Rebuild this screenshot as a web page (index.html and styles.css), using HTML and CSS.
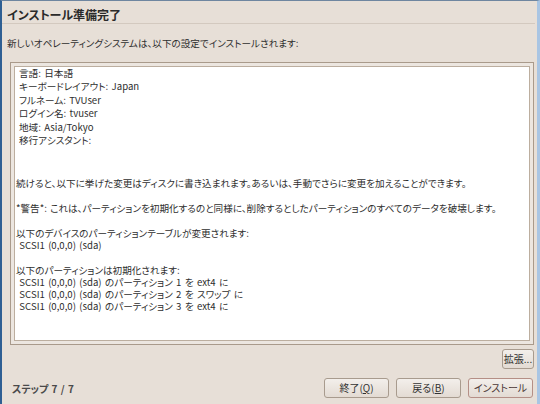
FILE: index.html
```html
<!DOCTYPE html>
<html lang="ja">
<head>
<meta charset="utf-8">
<link rel="stylesheet" href="styles.css">
</head>
<body>
<div class="win">
  <div class="title">インストール準備完了</div>
  <div class="sep"></div>
  <div class="subtitle">新しいオペレーティングシステムは、以下の設定でインストールされます:</div>
  <div class="frame">
    <div class="view">
      <div class="summary">
        <div>言語: 日本語</div>
        <div>キーボードレイアウト: Japan</div>
        <div>フルネーム: TVUser</div>
        <div>ログイン名: tvuser</div>
        <div>地域: Asia/Tokyo</div>
        <div>移行アシスタント:</div>
      </div>
      <div class="changes">
        <p>続けると、以下に挙げた変更はディスクに書き込まれます。あるいは、手動でさらに変更を加えることができます。</p>
        <p>*警告*: これは、パーティションを初期化するのと同様に、削除するとしたパーティションのすべてのデータを破壊します。</p>
        <p>以下のデバイスのパーティションテーブルが変更されます:<br>&nbsp;SCSI1 (0,0,0) (sda)</p>
        <p>以下のパーティションは初期化されます:<br>&nbsp;SCSI1 (0,0,0) (sda) のパーティション 1 を ext4 に<br>&nbsp;SCSI1 (0,0,0) (sda) のパーティション 2 を スワップ に<br>&nbsp;SCSI1 (0,0,0) (sda) のパーティション 3 を ext4 に</p>
      </div>
    </div>
  </div>
  <div class="row-adv">
    <button class="btn btn-adv">拡張...</button>
  </div>
  <div class="row-main">
    <div class="step">ステップ 7 / 7</div>
    <div class="buttons">
      <button class="btn">終了(<u>Q</u>)</button>
      <button class="btn">戻る(<u>B</u>)</button>
      <button class="btn btn-default">インストール</button>
    </div>
  </div>
</div>
</body>
</html>
```

FILE: styles.css
```css
html, body {
  margin: 0;
  padding: 0;
}
body {
  width: 540px;
  height: 404px;
  overflow: hidden;
  font-family: "Noto Sans CJK JP", "Noto Sans", sans-serif;
  font-feature-settings: "palt";
  color: #333;
}
.win {
  box-sizing: border-box;
  width: 540px;
  height: 404px;
  background: #e7dfd7;
  border-top: 1px solid #6f86a0;
  border-left: 2px solid #2f5f93;
  border-right: 3px solid #a9c5e3;
  display: flex;
  flex-direction: column;
}
.title {
  margin-top: 6px;
  padding-left: 5px;
  font-size: 12px;
  font-weight: bold;
  line-height: 16px;
  height: 16px;
  color: #2a2a2a;
}
.sep {
  height: 1px;
  background: #d3c9bf;
  margin-right: 2px;
}
.subtitle {
  margin-top: 12px;
  padding-left: 5px;
  font-size: 9.6px;
  line-height: 14px;
  height: 14px;
  color: #2e2e2e;
}
.frame {
  margin: 12px 3px 0 8px;
  height: 283px;
  box-sizing: border-box;
  border: 1px solid #a99a8b;
  padding: 3px;
  background: #ece6e0;
  display: flex;
}
.view {
  flex: 1;
  background: #fff;
  border: 1px solid #bcae9f;
  padding: 0 0 0 1px;
  font-size: 9.6px;
  color: #2e2e2e;
  overflow: hidden;
  word-spacing: 1.2px;
}
.summary {
  padding-left: 3px;
  line-height: 13.4px;
}
.changes {
  margin-top: 30px;
  line-height: 12.3px;
  white-space: nowrap;
}
.changes p {
  margin: 0 0 12.3px 0;
}
.row-adv {
  display: flex;
  justify-content: flex-end;
  margin: 4px 3px 0 0;
}
.row-main {
  display: flex;
  align-items: center;
  justify-content: space-between;
  margin: 9px 4px 0 10px;
}
.step {
  font-size: 10px;
  font-weight: bold;
  color: #4a4a4a;
  word-spacing: 1px;
}
.buttons {
  display: flex;
  gap: 7px;
}
.btn {
  box-sizing: border-box;
  height: 20px;
  width: 65px;
  padding: 0;
  font-family: "Noto Sans CJK JP", "Noto Sans", sans-serif;
  font-feature-settings: "palt";
  font-size: 10px;
  color: #333;
  background: linear-gradient(#f3efeb, #e3dbd3);
  border: 1px solid #a89b8e;
  border-radius: 3px;
  line-height: 18px;
}
.btn-adv {
  width: 32px;
}
.btn-default {
  border-color: #b58f86;
  color: #4a3636;
}
```
